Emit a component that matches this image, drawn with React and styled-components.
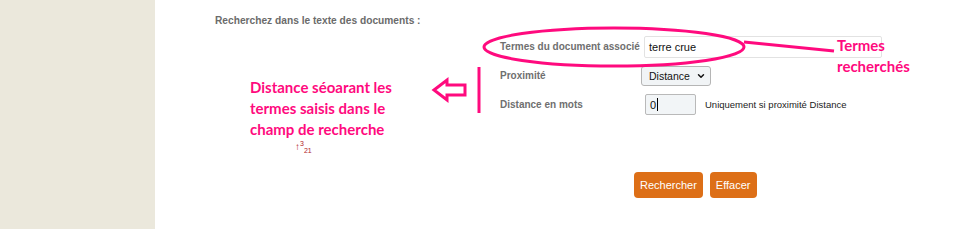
import React from 'react';
import styled, { createGlobalStyle } from 'styled-components';
import { ChevronDown } from 'lucide-react';

const PINK = '#ff0a7e';

const Global = createGlobalStyle`
  html, body { margin: 0; padding: 0; background: #fff; }
  body { font-family: "Liberation Sans", Arial, sans-serif; }
`;

const Page = styled.div`
  position: relative;
  display: flex;
  width: 960px;
  height: 229px;
  overflow: hidden;
`;

const Sidebar = styled.aside`
  width: 155px;
  flex: none;
  background: #ebe8dc;
`;

const Main = styled.main`
  flex: 1;
  padding: 15px 0 0 60px;
`;

const Heading = styled.h3`
  margin: 0;
  font-size: 10.2px;
  font-weight: bold;
  color: #6b6b6b;
`;

const Form = styled.div`
  display: grid;
  grid-template-columns: 141px auto;
  grid-auto-rows: 29px;
  align-items: center;
  margin: 6px 0 0 285px;
`;

const Label = styled.label`
  font-size: 10px;
  font-weight: bold;
  white-space: nowrap;
  color: #6f6f6f;
`;

const Field = styled.div`
  display: flex;
  align-items: center;
  gap: 9px;
  margin-left: ${(p) => p.$shift || 0}px;
`;

const TextInput = styled.div`
  box-sizing: border-box;
  width: ${(p) => p.$w}px;
  height: ${(p) => p.$h || 22}px;
  display: flex;
  align-items: center;
  padding-left: 4px;
  border: 1px solid ${(p) => (p.$muted ? '#b9b9b9' : '#e2e2e2')};
  border-radius: 2px;
  background: ${(p) => (p.$muted ? '#f2f5f7' : '#fff')};
  font-size: 11px;
  color: #111;
`;

const Caret = styled.span`
  display: inline-block;
  width: 1px;
  height: 13px;
  background: #000;
  margin-left: 1px;
`;

const Select = styled.div`
  box-sizing: border-box;
  width: 70px;
  height: 20px;
  display: flex;
  align-items: center;
  justify-content: space-between;
  padding: 0 4px 0 7px;
  border: 1px solid #b5b5b5;
  border-radius: 3px;
  background: #f1f4f6;
  font-size: 10.5px;
  color: #111;
`;

const Hint = styled.span`
  font-size: 9.5px;
  color: #222;
`;

const Actions = styled.div`
  display: flex;
  gap: 7px;
  margin: 53px 0 0 419px;
`;

const Button = styled.button`
  height: 26px;
  padding: 0 6px;
  border: 0;
  border-radius: 4px;
  background: #dd6f17;
  color: #fff;
  font-family: "Liberation Sans", Arial, sans-serif;
  font-size: 11px;
`;

const Overlay = styled.svg`
  position: absolute;
  left: 0;
  top: 0;
  pointer-events: none;
`;

const Note = styled.div`
  position: absolute;
  left: ${(p) => p.$x}px;
  top: ${(p) => p.$y}px;
  font-family: Lato, "Open Sans", sans-serif;
  font-weight: bold;
  font-size: 15px;
  line-height: 21px;
  color: ${PINK};
`;

const Marks = styled.div`
  position: absolute;
  left: 295px;
  top: 140px;
  font-family: "Liberation Sans", Arial, sans-serif;
  font-size: 10px;
  line-height: 1;
  color: #b0242a;
  sup, sub { font-size: 7px; }
`;

export default function App() {
  return (
    <>
      <Global />
      <Page>
        <Sidebar />
        <Main>
          <Heading>Recherchez dans le texte des documents :</Heading>
          <Form>
            <Label>Termes du document associé</Label>
            <Field $shift={3}>
              <TextInput $w={238}>terre crue</TextInput>
            </Field>
            <Label>Proximité</Label>
            <Field>
              <Select>
                Distance
                <ChevronDown size={10} strokeWidth={3.5} color="#111" />
              </Select>
            </Field>
            <Label>Distance en mots</Label>
            <Field $shift={4}>
              <TextInput $w={51} $h={21} $muted>
                0<Caret />
              </TextInput>
              <Hint>Uniquement si proximité Distance</Hint>
            </Field>
          </Form>
          <Actions>
            <Button>Rechercher</Button>
            <Button>Effacer</Button>
          </Actions>
        </Main>

        <Overlay width="960" height="229">
          <ellipse cx="614" cy="47" rx="130" ry="19" fill="none" stroke={PINK} strokeWidth="3" />
          <line x1="744" y1="42" x2="834" y2="51" stroke={PINK} strokeWidth="3" />
          <line x1="479" y1="67" x2="479" y2="113" stroke={PINK} strokeWidth="3" />
          <path
            d="M434 90 L447 80 L447 85 L465 85 L465 95 L447 95 L447 100 Z"
            fill="none"
            stroke={PINK}
            strokeWidth="3"
            strokeLinejoin="miter"
          />
        </Overlay>

        <Note $x={837} $y={35}>Termes<br />recherchés</Note>
        <Note $x={250} $y={77}>
          Distance séoarant les<br />termes saisis dans le<br />champ de recherche
        </Note>
        <Marks>↑<sup>3</sup><sub>2</sub><sub>1</sub></Marks>
      </Page>
    </>
  );
}
